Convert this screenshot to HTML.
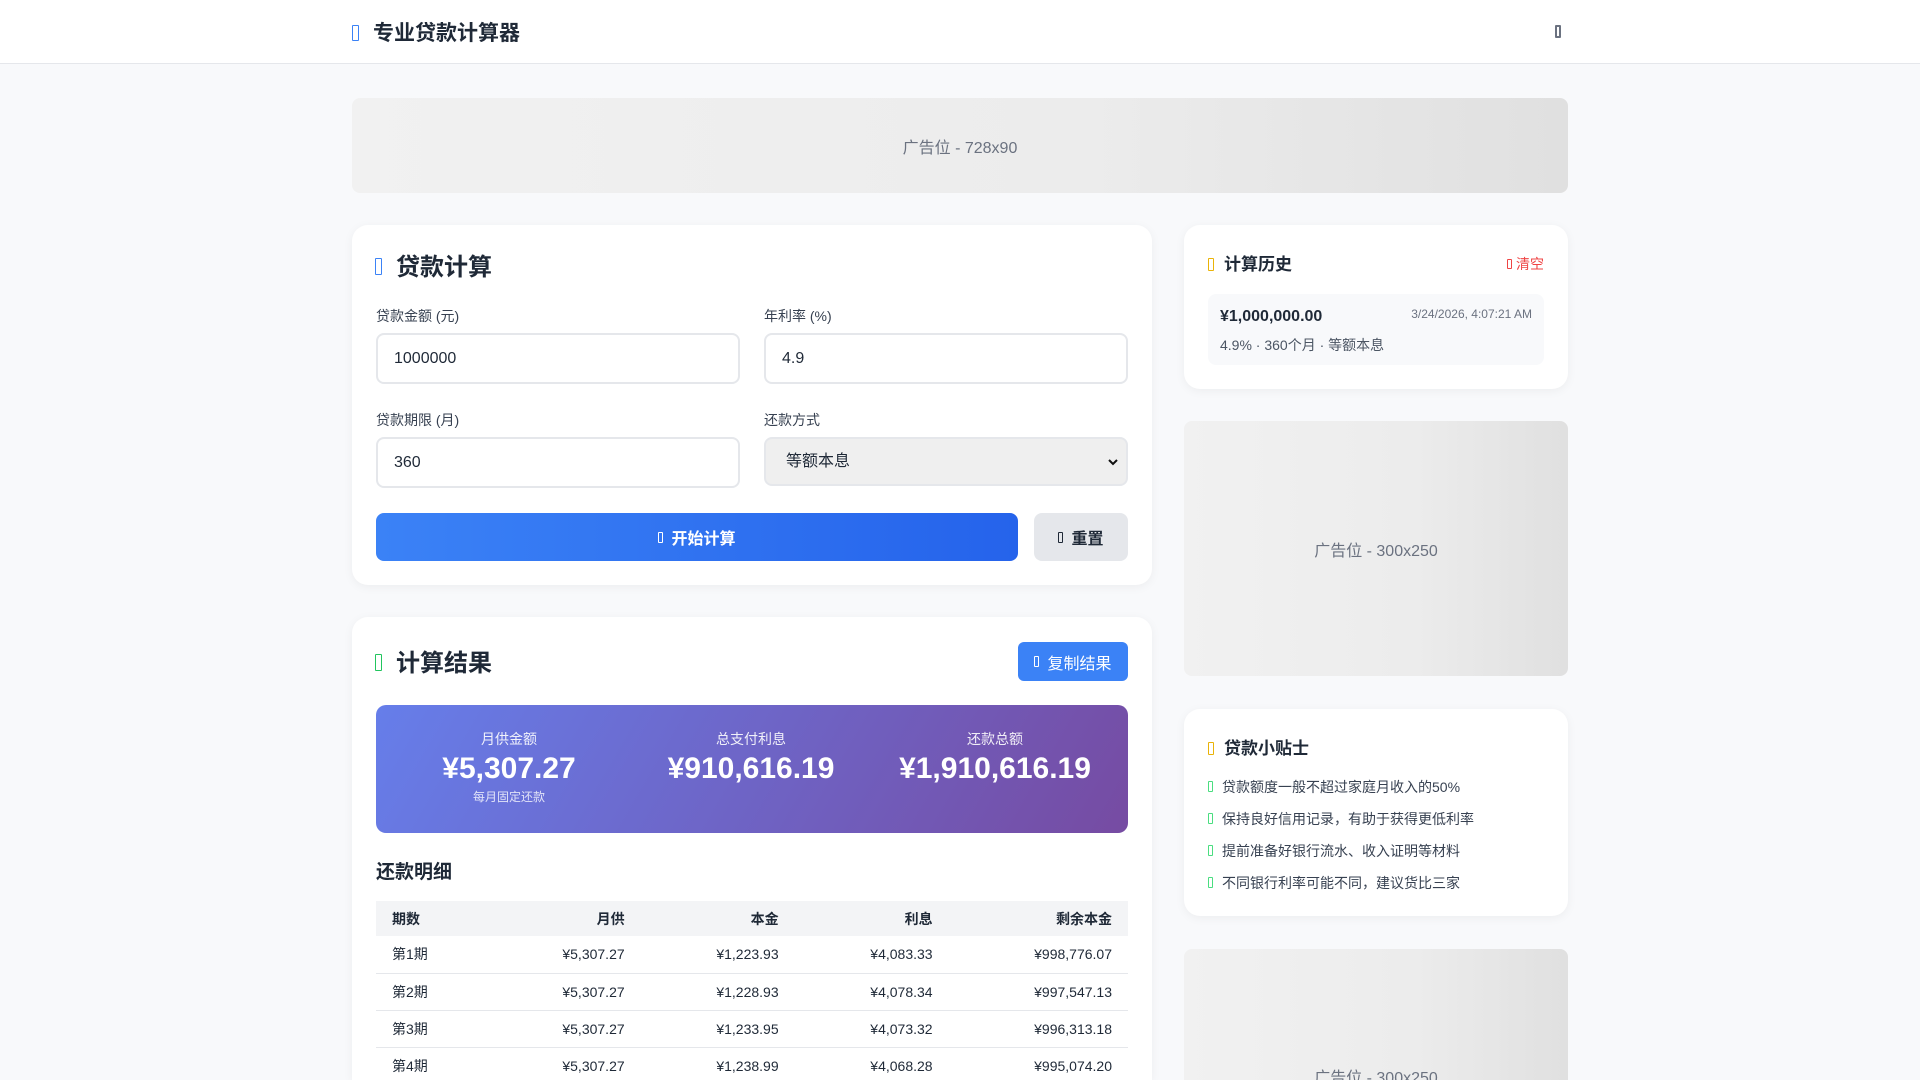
<!DOCTYPE html>
<html><head><meta charset="utf-8"><style>
*{box-sizing:border-box;margin:0;padding:0}
html{width:1920px;height:1080px;overflow:hidden}
body{position:relative;width:1920px;height:1080px;overflow:hidden;background:#f8f9fb;font-family:"Liberation Sans","Noto Sans CJK SC",sans-serif;color:#1f2937}
.ic{display:inline-block;width:6px;height:13px;border:1.5px solid currentColor;border-radius:1px;vertical-align:middle}
header{position:absolute;left:0;top:0;width:1920px;height:64px;background:#fff;border-bottom:1px solid #e5e7eb}
header .t{position:absolute;left:352px;top:17px;font-size:21px;font-weight:bold;color:#1f2937}
header .t .ic{color:#3b82f6;width:7px;height:16px;margin-right:14px;margin-top:-3px}
header .m{position:absolute;left:1555px;top:25px;width:6px;height:13px;border:2px solid #6b7280;border-radius:1px}
.ad{position:absolute;background:linear-gradient(90deg,#f1f1f1 0%,#ececec 60%,#e0e0e0 100%);border-radius:8px;color:#6b7280;font-size:16px;display:flex;align-items:center;justify-content:center}
.card{position:absolute;background:#fff;border-radius:16px;box-shadow:0 2px 10px rgba(0,0,0,.05)}
.h2{position:absolute;font-size:24px;font-weight:bold;color:#1f2937}
.h2 .ic{width:7px;height:17px;margin-right:14px;margin-top:-4px}
.lbl{position:absolute;font-size:14px;color:#374151}
.inp{position:absolute;height:51px;border:2px solid #e5e7eb;border-radius:8px;background:#fff;font-size:16px;padding-left:16px;line-height:47px;color:#1f2937}
.h3{position:absolute;font-size:17px;font-weight:bold;color:#1f2937}
.h3 .ic{color:#eab308;margin-right:10px;margin-top:-3px}
td,th{font-size:14px;height:37px;padding:0 16px;text-align:right;border-bottom:1px solid #e5e7eb}
th{background:#f3f4f6;height:35px;font-weight:bold;border:none}
td:first-child,th:first-child{text-align:left}
.tip{position:absolute;left:1208px;font-size:14px;color:#374151}
.tip .ic{color:#4ade80;width:5px;height:11px;margin-right:9px;margin-top:-3px}
</style></head><body>
<header><div class="t"><span class="ic"></span>专业贷款计算器</div><div class="m"></div></header>
<div class="ad" style="left:352px;top:98px;width:1216px;height:95px">广告位 - 728x90</div>

<div class="card" style="left:352px;top:225px;width:800px;height:360px">
 <div class="h2" style="left:23px;top:22px"><span class="ic" style="color:#3b82f6"></span>贷款计算</div>
 <div class="lbl" style="left:24px;top:81px">贷款金额 (元)</div>
 <div class="inp" style="left:24px;top:108px;width:364px">1000000</div>
 <div class="lbl" style="left:412px;top:81px">年利率 (%)</div>
 <div class="inp" style="left:412px;top:108px;width:364px">4.9</div>
 <div class="lbl" style="left:24px;top:185px">贷款期限 (月)</div>
 <div class="inp" style="left:24px;top:212px;width:364px">360</div>
 <div class="lbl" style="left:412px;top:185px">还款方式</div>
 <div class="inp" style="left:412px;top:212px;width:364px;height:49px;background:#efefef;line-height:45px;padding-left:20px">等额本息<svg style="position:absolute;right:8px;top:19px" width="10" height="8" viewBox="0 0 10 8"><path d="M1 2l4 4 4-4" fill="none" stroke="#111" stroke-width="2"/></svg></div>
 <div style="position:absolute;left:24px;top:288px;width:642px;height:48px;border-radius:8px;background:linear-gradient(90deg,#3b82f6,#2563eb);color:#fff;font-size:16px;font-weight:bold;display:flex;align-items:center;justify-content:center"><span class="ic" style="width:5px;height:11px;margin-right:8px"></span>开始计算</div>
 <div style="position:absolute;left:682px;top:288px;width:94px;height:48px;border-radius:8px;background:#e5e7eb;color:#1f2937;font-size:16px;font-weight:bold;display:flex;align-items:center;justify-content:center"><span class="ic" style="width:5px;height:11px;margin-right:8px"></span>重置</div>
</div>

<div class="card" style="left:352px;top:617px;width:800px;height:463px;overflow:hidden;border-radius:16px 16px 0 0">
 <div class="h2" style="left:23px;top:26px"><span class="ic" style="color:#22c55e"></span>计算结果</div>
 <div style="position:absolute;left:666px;top:25px;width:110px;height:39px;border-radius:6px;background:#3b82f6;color:#fff;font-size:16px;display:flex;align-items:center;justify-content:center"><span class="ic" style="width:5px;height:11px;margin-right:8px"></span>复制结果</div>
 <div style="position:absolute;left:24px;top:88px;width:752px;height:128px;border-radius:10px;background:linear-gradient(120deg,#667eea,#764ba2);color:#fff">
  <div style="position:absolute;left:0;width:266px;top:24px;text-align:center"><div style="font-size:14px;opacity:.9">月供金额</div><div style="font-size:30px;font-weight:bold;margin-top:3px">¥5,307.27</div><div style="font-size:12px;opacity:.8;margin-top:2px">每月固定还款</div></div>
  <div style="position:absolute;left:242px;width:266px;top:24px;text-align:center"><div style="font-size:14px;opacity:.9">总支付利息</div><div style="font-size:30px;font-weight:bold;margin-top:3px">¥910,616.19</div></div>
  <div style="position:absolute;left:486px;width:266px;top:24px;text-align:center"><div style="font-size:14px;opacity:.9">还款总额</div><div style="font-size:30px;font-weight:bold;margin-top:3px">¥1,910,616.19</div></div>
 </div>
 <div style="position:absolute;left:24px;top:240px;font-size:19px;font-weight:bold">还款明细</div>
 <table style="position:absolute;left:24px;top:284px;width:752px;border-collapse:collapse">
  <tr><th>期数</th><th>月供</th><th>本金</th><th>利息</th><th>剩余本金</th></tr>
  <tr><td>第1期</td><td>¥5,307.27</td><td>¥1,223.93</td><td>¥4,083.33</td><td>¥998,776.07</td></tr>
  <tr><td>第2期</td><td>¥5,307.27</td><td>¥1,228.93</td><td>¥4,078.34</td><td>¥997,547.13</td></tr>
  <tr><td>第3期</td><td>¥5,307.27</td><td>¥1,233.95</td><td>¥4,073.32</td><td>¥996,313.18</td></tr>
  <tr><td>第4期</td><td>¥5,307.27</td><td>¥1,238.99</td><td>¥4,068.28</td><td>¥995,074.20</td></tr>
 </table>
</div>

<div class="card" style="left:1184px;top:225px;width:384px;height:164px">
 <div class="h3" style="left:24px;top:25px"><span class="ic"></span>计算历史</div>
 <div style="position:absolute;right:24px;top:29px;font-size:14px;color:#ef4444"><span class="ic" style="width:5px;height:10px;margin-right:4px;margin-top:-3px"></span>清空</div>
 <div style="position:absolute;left:24px;top:69px;width:336px;height:71px;border-radius:8px;background:#f8f9fb">
  <div style="position:absolute;left:12px;top:14px;font-size:16px;font-weight:bold">¥1,000,000.00</div>
  <div style="position:absolute;right:12px;top:13px;font-size:12px;color:#6b7280">3/24/2026, 4:07:21 AM</div>
  <div style="position:absolute;left:12px;top:41px;font-size:14px;color:#4b5563">4.9% · 360个月 · 等额本息</div>
 </div>
</div>

<div class="ad" style="left:1184px;top:421px;width:384px;height:255px">广告位 - 300x250</div>

<div class="card" style="left:1184px;top:709px;width:384px;height:207px">
 <div class="h3" style="left:24px;top:25px"><span class="ic"></span>贷款小贴士</div>
</div>
<div class="tip" style="top:777px"><span class="ic"></span>贷款额度一般不超过家庭月收入的50%</div>
<div class="tip" style="top:809px"><span class="ic"></span>保持良好信用记录，有助于获得更低利率</div>
<div class="tip" style="top:841px"><span class="ic"></span>提前准备好银行流水、收入证明等材料</div>
<div class="tip" style="top:873px"><span class="ic"></span>不同银行利率可能不同，建议货比三家</div>

<div class="ad" style="left:1184px;top:949px;width:384px;height:131px;border-radius:8px 8px 0 0;align-items:flex-start;padding-top:115px;overflow:hidden">广告位 - 300x250</div>
</body></html>
